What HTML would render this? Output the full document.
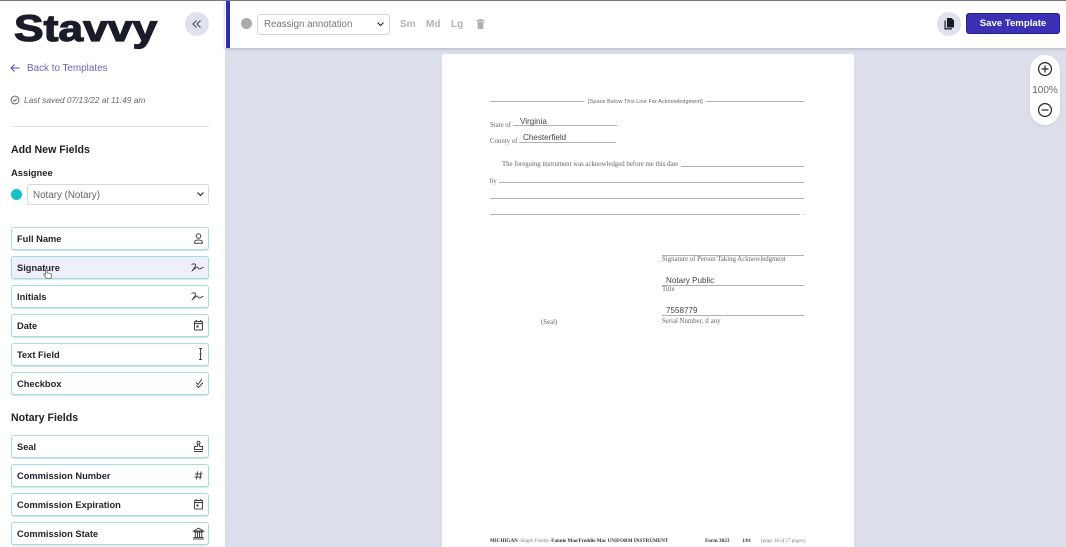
<!DOCTYPE html>
<html><head><meta charset="utf-8">
<style>
*{box-sizing:border-box}
html,body{margin:0;padding:0}
body{width:1066px;height:547px;position:relative;overflow:hidden;background:#dcdeec;font-family:"Liberation Sans",sans-serif;color:#1c1c24}
#w{position:absolute;left:0;top:0;width:1066px;height:547px;overflow:hidden;background:#dcdeec;filter:blur(.3px)}
.a{position:absolute;white-space:nowrap}
#side{position:absolute;left:0;top:0;width:225px;height:547px;background:#fff}
.f{position:absolute;left:11px;width:198px;height:23px;background:#fff;border:1px solid #a6dbe3;border-radius:3px;box-shadow:0 1px 1px #cfe3e8;font-size:9.3px;font-weight:bold;line-height:22px;padding-left:5px;color:#24242c}
.f svg{position:absolute;right:2px;top:3px;width:15px;height:15px;fill:none;stroke:#444;stroke-width:1}
.h{font-size:10.6px;font-weight:bold;color:#20202a}
.d{font-family:"Liberation Serif",serif;font-size:6.8px;color:#666}
.l{position:absolute;height:1px;background:#b0b0b0}
.t{font-size:8.1px;color:#444;font-family:"Liberation Sans",sans-serif}
</style></head><body><div id="w">
<div class="a" style="left:0;top:0;width:1066px;height:1px;background:#777;z-index:5"></div>

<div id="side">
<div class="a" style="left:14px;top:8px;font-size:37px;font-weight:bold;color:#1b1c29;transform-origin:0 0;transform:scaleX(1.2);-webkit-text-stroke:1.2px #1b1c29">Stavvy</div>
<div class="a" style="left:185px;top:12px;width:24px;height:24px;border-radius:50%;background:#dfe1ee"></div>
<svg class="a" style="left:192px;top:19px" width="10" height="10" viewBox="0 0 10 10" fill="none" stroke="#444" stroke-width="1"><path d="M4.500 1.500 1 5l3.500 3.500M8.500 1.500 5 5l3.500 3.500"/></svg>

<svg class="a" style="left:10px;top:63px" width="10" height="10" viewBox="0 0 10 10" fill="none" stroke="#4a45b0" stroke-width="1"><path d="M9.500 5H1M4.500 1.500 1 5l3.500 3.500"/></svg>
<div class="a" style="left:27px;top:63px;font-size:9.9px;color:#6a66bd">Back to Templates</div>

<svg class="a" style="left:10px;top:95px" width="10" height="10" viewBox="0 0 10 10" fill="none" stroke="#555" stroke-width=".9"><circle cx="5" cy="5" r="3.900"/><path d="M3.200 5.100 4.500 6.400 6.900 3.800"/></svg>
<div class="a" style="left:24px;top:95px;font-size:8.4px;font-style:italic;color:#666">Last saved 07/13/22 at 11:49 am</div>
<div class="a" style="left:11px;top:126px;width:198px;height:1px;background:#e2e2e6"></div>

<div class="a h" style="left:11px;top:144px">Add New Fields</div>
<div class="a" style="left:11px;top:167px;font-size:9.4px;font-weight:bold;color:#20202a">Assignee</div>
<div class="a" style="left:11px;top:189px;width:11px;height:11px;border-radius:50%;background:#12c2c8"></div>
<div class="a" style="left:27px;top:184px;width:182px;height:21px;border:1px solid #d8d8de;border-radius:3px;font-size:9.8px;line-height:21px;padding-left:5px;color:#666">Notary (Notary)</div>
<svg class="a" style="left:196px;top:191px" width="9" height="7" viewBox="0 0 9 7" fill="none" stroke="#222" stroke-width="1.100"><path d="M1.500 1.500 4.500 4.500 7.500 1.500"/></svg>

<div class="f" style="top:227px">Full Name<svg viewBox="0 0 15 15"><circle cx="7.500" cy="5" r="2.300"/><path d="M3.700 12.200v-1.300c0-1.200 1.800-1.900 3.800-1.900s3.800.7 3.800 1.900v1.300z"/></svg></div>
<div class="f" style="top:256px;background:#eef0f9">Signature<svg viewBox="0 0 15 15"><path d="M.5 4.500C2 3.500 5 3.500 4.500 5.500 4 7.500 2 9.500 1.500 10.500 3 9.500 5 7 6 7 7 7 7 9 8.500 9 9.500 9 10.500 7.500 12.500 7.500"/></svg></div>
<div class="f" style="top:285px">Initials<svg viewBox="0 0 15 15"><path d="M.5 4.500C2 3.500 5 3.500 4.500 5.500 4 7.500 2 9.500 1.500 10.500 3 9.500 5 7 6 7 7 7 7 9 8.500 9 9.500 9 10.500 7.500 12.500 7.500"/></svg></div>
<div class="f" style="top:314px">Date<svg viewBox="0 0 15 15"><rect x="3.500" y="3.500" width="8" height="8.500" rx=".6"/><path d="M3.500 5.500h8M5.200 2v1.500M9.800 2v1.500" stroke-width="1.300"/><rect x="5.500" y="7.500" width="2" height="2" fill="#333" stroke="none"/></svg></div>
<div class="f" style="top:343px">Text Field<svg viewBox="0 0 15 15"><path d="M8 1.500h3M8 12.500h3M9.500 1.500v11M8.500 7h2"/></svg></div>
<div class="f" style="top:372px">Checkbox<svg viewBox="0 0 15 15"><path d="M5 6.500 7 8.500 11 3M5.500 9.500 7.500 11.500 12 6.500"/></svg></div>

<div class="a h" style="left:11px;top:412px">Notary Fields</div>
<div class="f" style="top:435px">Seal<svg viewBox="0 0 15 15"><circle cx="7.500" cy="3.700" r="1.500"/><path d="M6.700 5.200 6.300 7.500H3.500v3h8v-3H8.700L8.300 5.200M3 12.500h9"/></svg></div>
<div class="f" style="top:464px">Commission Number<svg viewBox="0 0 15 15"><path d="M6.500 3.500 5.500 11.500M10 3.500 9 11.500M4 6h7.500M3.500 9h7.500"/></svg></div>
<div class="f" style="top:493px">Commission Expiration<svg viewBox="0 0 15 15"><rect x="3.500" y="3.500" width="8" height="8.500" rx=".6"/><path d="M3.500 5.500h8M5.200 2v1.500M9.800 2v1.500" stroke-width="1.300"/><rect x="5.500" y="7.500" width="2" height="2" fill="#333" stroke="none"/></svg></div>
<div class="f" style="top:522px">Commission State<svg viewBox="0 0 15 15"><path d="M2.500 5 7.500 2.200 12.500 5zM3 6h9M4.300 6.500v4.500M6.500 6.500v4.500M8.500 6.500v4.500M10.700 6.500v4.500M2.500 11.500h10M2 13h11"/></svg></div>

<svg class="a" style="left:42px;top:267px" width="12" height="14" viewBox="0 0 12 14"><path d="M3.500 1.700c.8-.6 1.500 0 1.500.8v3.300l3.500.8c1 .3 1.200.9 1 1.900l-.6 3.100H4.500L1.800 7.800c-.4-.8.500-1.400 1.700-.4z" fill="#fff" stroke="#666" stroke-width=".8"/></svg>
</div>

<!-- Toolbar -->
<div class="a" style="left:225px;top:0;width:841px;height:48px;background:#fff;box-shadow:0 1px 3px #b5b6c0"></div>
<div class="a" style="left:226px;top:1px;width:4px;height:47px;background:#2d2cb4"></div>
<div class="a" style="left:241px;top:18px;width:11px;height:11px;border-radius:50%;background:#aaa"></div>
<div class="a" style="left:257px;top:14px;width:133px;height:21px;border:1px solid #d4d4d9;border-radius:3px;font-size:9.7px;line-height:20.500px;padding-left:6px;color:#777">Reassign annotation</div>
<svg class="a" style="left:376px;top:21px" width="9" height="7" viewBox="0 0 9 7" fill="none" stroke="#222" stroke-width="1.100"><path d="M1.500 1.500 4.500 4.500 7.500 1.500"/></svg>
<div class="a" style="left:400px;top:19px;font-size:10px;font-weight:bold;color:#b3b3b3">Sm</div>
<div class="a" style="left:426px;top:19px;font-size:10px;font-weight:bold;color:#b3b3b3">Md</div>
<div class="a" style="left:451px;top:19px;font-size:10px;font-weight:bold;color:#b3b3b3">Lg</div>
<svg class="a" style="left:475px;top:18px" width="11" height="12" viewBox="0 0 11 12" fill="#b0b0b0"><path d="M1.500 2h8v1.200h-8zM4 1h3v1H4zM2.300 3.800h6.400L8.200 11H2.800z"/></svg>

<div class="a" style="left:937px;top:12px;width:24px;height:24px;border-radius:50%;background:#dfe1ee"></div>
<svg class="a" style="left:943px;top:17px" width="13" height="14" viewBox="0 0 13 14" fill="#1a1a22"><path d="M1.500 3.500h1.200v7.800h6.300v1.200H1.500z"/><path d="M4 1h4.500L11 3.500V10.500H4z"/></svg>
<div class="a" style="left:966px;top:13px;width:94px;height:21px;background:#3a31b5;border:1px solid #241f8a;border-radius:3px;color:#fff;font-size:9.6px;font-weight:bold;line-height:20px;text-align:center">Save Template</div>

<!-- Zoom -->
<div class="a" style="left:1030px;top:55px;width:30px;height:70px;background:#fff;border-radius:15px;box-shadow:0 1px 2px #c8c9d4"></div>
<svg class="a" style="left:1037px;top:61px" width="16" height="16" viewBox="0 0 16 16" fill="none" stroke="#222" stroke-width="1.200"><circle cx="8" cy="8" r="6.400"/><path d="M8 4.500v7M4.500 8h7"/></svg>
<div class="a" style="left:1030px;width:30px;top:85px;font-size:10px;color:#666;text-align:center">100%</div>
<svg class="a" style="left:1037px;top:102px" width="16" height="16" viewBox="0 0 16 16" fill="none" stroke="#222" stroke-width="1.200"><circle cx="8" cy="8" r="6.400"/><path d="M4.500 8h7"/></svg>

<!-- Document -->
<div class="a" style="left:442px;top:54px;width:412px;height:493px;background:#fff"></div>
<div class="l" style="left:490px;top:101px;width:94px"></div>
<div class="a" style="left:588px;top:99px;font-size:5.45px;color:#666;letter-spacing:.1px">[Space Below This Line For Acknowledgment]</div>
<div class="l" style="left:706px;top:101px;width:98px"></div>

<div class="a d" style="left:490px;top:122px">State of</div>
<div class="l" style="left:513px;top:125px;width:104px"></div>
<div class="a t" style="left:520px;top:117px">Virginia</div>
<div class="a d" style="left:490px;top:138px">County of</div>
<div class="l" style="left:519px;top:142px;width:97px"></div>
<div class="a t" style="left:523px;top:133px">Chesterfield</div>

<div class="a d" style="left:502px;top:161px">The foregoing instrument was acknowledged before me this date</div>
<div class="l" style="left:681px;top:166px;width:123px"></div>
<div class="a d" style="left:490px;top:178px">by</div>
<div class="l" style="left:499px;top:182px;width:305px"></div>
<div class="l" style="left:490px;top:198px;width:314px"></div>
<div class="l" style="left:490px;top:214px;width:310px"></div>
<div class="a d" style="left:803px;top:210px">.</div>

<div class="l" style="left:662px;top:255px;width:142px"></div>
<div class="a d" style="left:662px;top:256px">Signature of Person Taking Acknowledgment</div>
<div class="a t" style="left:666px;top:276px">Notary Public</div>
<div class="l" style="left:662px;top:285px;width:142px"></div>
<div class="a d" style="left:662px;top:286px">Title</div>
<div class="a t" style="left:666px;top:306px">7558779</div>
<div class="l" style="left:662px;top:315px;width:142px"></div>
<div class="a d" style="left:662px;top:318px">Serial Number, if any</div>
<div class="a d" style="left:541px;top:319px">(Seal)</div>

<div class="a" style="left:490px;top:538px;font-family:'Liberation Serif',serif;font-size:5.1px;color:#333"><b>MICHIGAN</b><span style="color:#777">–<i>Single Family</i>–</span><b>Fannie Mae/Freddie Mac UNIFORM INSTRUMENT</b></div>
<div class="a" style="left:705px;top:538px;font-family:'Liberation Serif',serif;font-size:5.3px;color:#333;font-weight:bold">Form 3023</div>
<div class="a" style="left:742px;top:538px;font-family:'Liberation Serif',serif;font-size:5.1px;color:#333;font-weight:bold">1/01</div>
<div class="a" style="left:761px;top:538px;font-family:'Liberation Serif',serif;font-size:5.1px;color:#777;font-style:italic">(page 16 of 17 pages)</div>
</div></body></html>
